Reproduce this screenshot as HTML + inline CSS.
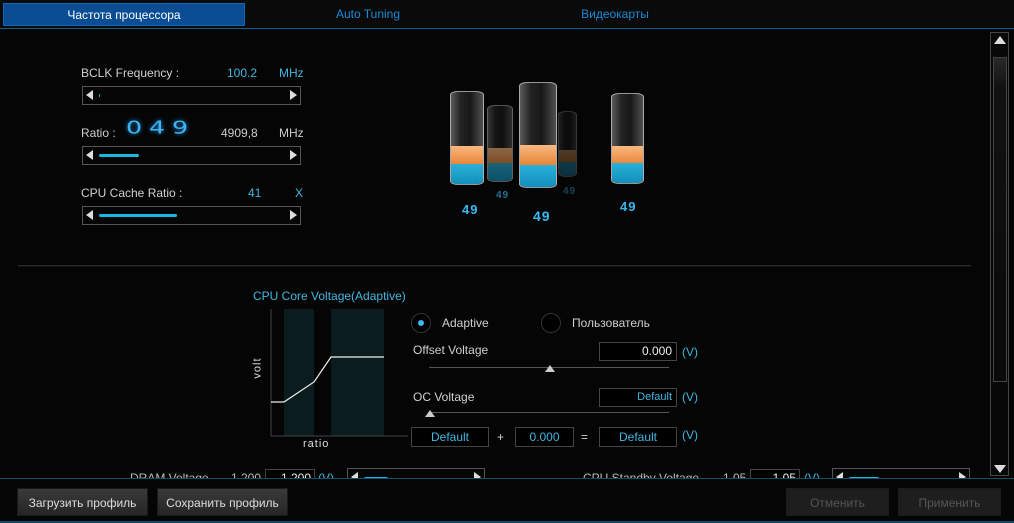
<!DOCTYPE html>
<html><head><meta charset="utf-8"><style>
*{margin:0;padding:0;box-sizing:border-box}
body{width:1014px;height:523px;background:#050505;font-family:"Liberation Sans","Noto Sans CJK SC",sans-serif;font-size:12px;color:#d0d0d0;position:relative;overflow:hidden}
.a{position:absolute}
.tab{position:absolute;top:3px;height:23px;line-height:23px;text-align:center;color:#1a8ad8;font-size:12px}
.slider{position:absolute;height:19px;border:1px solid #555;background:#050505}
.slider .l{position:absolute;left:3px;top:3px;width:0;height:0;border-top:5px solid transparent;border-bottom:5px solid transparent;border-right:7px solid #ddd}
.slider .r{position:absolute;right:3px;top:3px;width:0;height:0;border-top:5px solid transparent;border-bottom:5px solid transparent;border-left:7px solid #ddd}
.slider .f{position:absolute;left:16px;top:7px;height:3px;background:#19b8e0;border-radius:2px}
.blue{color:#42b6e0}
.box{position:absolute;border:1px solid #444;background:#000;height:19px;line-height:17px;color:#42b6e0;font-size:12px}
.btn{position:absolute;top:488px;height:28px;line-height:28px;text-align:center;background:linear-gradient(#3a3a3a,#262626);border:1px solid #1a1a1a;color:#ddd;font-size:12px}
.cyl{position:absolute;border:1px solid rgba(230,230,230,.6);border-radius:8px/4px;background:linear-gradient(90deg,rgba(255,255,255,.35),rgba(255,255,255,.12) 30%,rgba(255,255,255,.08) 60%,rgba(255,255,255,.3))}
.cyl .o{position:absolute;left:0;right:0;background:linear-gradient(#f9b880,#e68030)}
.cyl .b{position:absolute;left:0;right:0;bottom:0;background:linear-gradient(#2ab0d8,#1190bb);border-radius:0 0 8px 8px/0 0 4px 4px}
.n{position:absolute;color:#3bb8f0;font-weight:bold;letter-spacing:1px}
</style></head><body>
<div class="a" style="left:0;top:0;width:1014px;height:28px;background:#0a0a0a"></div>
<div class="tab" style="left:3px;width:242px;background:#0a4d94;color:#fff;border:1px solid #1565b0">Частота процессора</div>
<div class="tab" style="left:248px;width:240px">Auto Tuning</div>
<div class="tab" style="left:494px;width:242px">Видеокарты</div>
<div class="a" style="left:0;top:28px;width:1014px;height:1px;background:#0e5c8a"></div>

<div class="a" style="left:81px;top:66px">BCLK Frequency :</div>
<div class="a blue" style="left:227px;top:66px">100.2</div>
<div class="a blue" style="left:279px;top:66px">MHz</div>
<div class="slider" style="left:82px;top:86px;width:219px"><div class="l"></div><div class="f" style="width:1px;left:16px"></div><div class="r"></div></div>

<div class="a" style="left:81px;top:126px">Ratio :</div>
<div class="a" style="left:126px;top:116px;font-size:22px;color:#3fb4f0;letter-spacing:6px;text-shadow:0 0 5px #1a8ad8;font-family:'DejaVu Sans',sans-serif;transform:scaleX(1.15) scaleY(.8);transform-origin:left center">049</div>
<div class="a" style="left:221px;top:126px;color:#ccc">4909,8</div>
<div class="a" style="left:279px;top:126px;color:#ccc">MHz</div>
<div class="slider" style="left:82px;top:146px;width:219px"><div class="l"></div><div class="f" style="width:40px"></div><div class="r"></div></div>

<div class="a" style="left:81px;top:186px">CPU Cache Ratio :</div>
<div class="a blue" style="left:248px;top:186px">41</div>
<div class="a blue" style="left:295px;top:186px">X</div>
<div class="slider" style="left:82px;top:206px;width:219px"><div class="l"></div><div class="f" style="width:78px"></div><div class="r"></div></div>

<!-- cylinders -->
<div class="cyl" style="left:487px;top:105px;width:26px;height:77px;opacity:.55"><div class="o" style="top:42px;height:17px"></div><div class="b" style="height:18px"></div></div>
<div class="cyl" style="left:558px;top:111px;width:19px;height:66px;opacity:.3"><div class="o" style="top:38px;height:14px"></div><div class="b" style="height:14px"></div></div>
<div class="cyl" style="left:450px;top:91px;width:34px;height:94px"><div class="o" style="top:54px;height:20px"></div><div class="b" style="height:20px"></div></div>
<div class="cyl" style="left:519px;top:82px;width:38px;height:106px"><div class="o" style="top:62px;height:22px"></div><div class="b" style="height:22px"></div></div>
<div class="cyl" style="left:611px;top:93px;width:33px;height:91px"><div class="o" style="top:52px;height:20px"></div><div class="b" style="height:20px"></div></div>
<div class="n" style="left:462px;top:202px;font-size:13px">49</div>
<div class="n" style="left:496px;top:190px;font-size:10px;opacity:.6">49</div>
<div class="n" style="left:533px;top:208px;font-size:14px">49</div>
<div class="n" style="left:563px;top:186px;font-size:10px;opacity:.35">49</div>
<div class="n" style="left:620px;top:199px;font-size:13px">49</div>

<div class="a" style="left:18px;top:265px;width:953px;height:2px;border-top:1px solid #2a2a2a;border-bottom:1px solid #151515"></div>

<div class="a blue" style="left:253px;top:289px">CPU Core Voltage(Adaptive)</div>
<svg class="a" style="left:250px;top:305px" width="160" height="150">
<rect x="34" y="4" width="30" height="127" fill="#0b1c1e"/>
<rect x="81" y="4" width="53" height="127" fill="#0b1c1e"/>
<line x1="21" y1="4" x2="21" y2="131" stroke="#444"/>
<line x1="21" y1="131" x2="158" y2="131" stroke="#444"/>
<polyline points="21,97 34,97 64,77 81,52 134,52" fill="none" stroke="#eee" stroke-width="1.2"/>
</svg>
<div class="a" style="left:247px;top:362px;transform:rotate(-90deg);font-size:11px;color:#ddd;letter-spacing:1px">volt</div>
<div class="a" style="left:303px;top:438px;font-size:11px;color:#ddd;letter-spacing:1px">ratio</div>

<div class="a" style="left:411px;top:313px;width:20px;height:20px;border-radius:50%;border:1px solid #333;background:#000"><div class="a" style="left:6px;top:6px;width:6px;height:6px;border-radius:50%;background:#3bb8f0"></div></div>
<div class="a" style="left:442px;top:316px">Adaptive</div>
<div class="a" style="left:541px;top:313px;width:20px;height:20px;border-radius:50%;border:1px solid #333;background:#000"></div>
<div class="a" style="left:572px;top:316px">Пользователь</div>

<div class="a" style="left:413px;top:343px">Offset Voltage</div>
<div class="box" style="left:599px;top:342px;width:78px;text-align:right;padding-right:4px;color:#eee">0.000</div>
<div class="a blue" style="left:682px;top:345px">(V)</div>
<div class="a" style="left:429px;top:367px;width:240px;height:1px;background:#555"></div>
<div class="a" style="left:545px;top:365px;border-left:5px solid transparent;border-right:5px solid transparent;border-bottom:7px solid #ccc"></div>

<div class="a" style="left:413px;top:390px">OC Voltage</div>
<div class="box" style="left:599px;top:388px;width:78px;text-align:right;padding-right:4px;font-size:11px">Default</div>
<div class="a blue" style="left:682px;top:390px">(V)</div>
<div class="a" style="left:429px;top:412px;width:240px;height:1px;background:#555"></div>
<div class="a" style="left:425px;top:410px;border-left:5px solid transparent;border-right:5px solid transparent;border-bottom:7px solid #ccc"></div>

<div class="box" style="left:411px;top:427px;width:78px;height:20px;text-align:center;line-height:18px">Default</div>
<div class="a" style="left:497px;top:430px">+</div>
<div class="box" style="left:515px;top:427px;width:59px;height:20px;text-align:center;line-height:18px">0.000</div>
<div class="a" style="left:581px;top:430px">=</div>
<div class="box" style="left:599px;top:427px;width:78px;height:20px;text-align:center;line-height:18px">Default</div>
<div class="a blue" style="left:682px;top:428px">(V)</div>

<!-- cut-off row -->
<div class="a" style="left:0;top:466px;width:990px;height:12px;overflow:hidden">
<div class="a" style="left:130px;top:5px;color:#bbb">DRAM Voltage</div>
<div class="a" style="left:231px;top:5px;color:#bbb">1.200</div>
<div class="box" style="left:265px;top:3px;width:50px;text-align:right;color:#eee;padding-right:3px">1.200</div>
<div class="a blue" style="left:318px;top:5px">(V)</div>
<div class="slider" style="left:347px;top:2px;width:138px"><div class="l" style="top:3px"></div><div class="f" style="width:24px;top:8px"></div><div class="r" style="top:3px"></div></div>
<div class="a" style="left:583px;top:5px;color:#bbb">CPU Standby Voltage</div>
<div class="a" style="left:723px;top:5px;color:#bbb">1.05</div>
<div class="box" style="left:750px;top:3px;width:50px;text-align:right;color:#eee;padding-right:3px">1.05</div>
<div class="a blue" style="left:804px;top:5px">(V)</div>
<div class="slider" style="left:832px;top:2px;width:138px"><div class="l" style="top:3px"></div><div class="f" style="width:30px;top:8px"></div><div class="r" style="top:3px"></div></div>
</div>

<!-- scrollbar -->
<div class="a" style="left:990px;top:32px;width:19px;height:444px;border:1px solid #444;background:#080808"></div>
<div class="a" style="left:994px;top:36px;border-left:6px solid transparent;border-right:6px solid transparent;border-bottom:8px solid #ddd"></div>
<div class="a" style="left:993px;top:57px;width:14px;height:325px;border:1px solid #444;background:linear-gradient(#2a2a2a,#111 30px,#0a0a0a)"></div>
<div class="a" style="left:994px;top:465px;border-left:6px solid transparent;border-right:6px solid transparent;border-top:8px solid #ddd"></div>

<div class="a" style="left:0;top:478px;width:1014px;height:1px;background:#12506e"></div>
<div class="a" style="left:0;top:479px;width:1014px;height:44px;background:#050505"></div>
<div class="a" style="left:0;top:521px;width:1014px;height:2px;background:#114a66"></div>
<div class="btn" style="left:17px;width:131px">Загрузить профиль</div>
<div class="btn" style="left:157px;width:131px">Сохранить профиль</div>
<div class="btn" style="left:786px;width:103px;color:#555;background:#1e1e1e">Отменить</div>
<div class="btn" style="left:898px;width:103px;color:#555;background:#1e1e1e">Применить</div>
</body></html>
